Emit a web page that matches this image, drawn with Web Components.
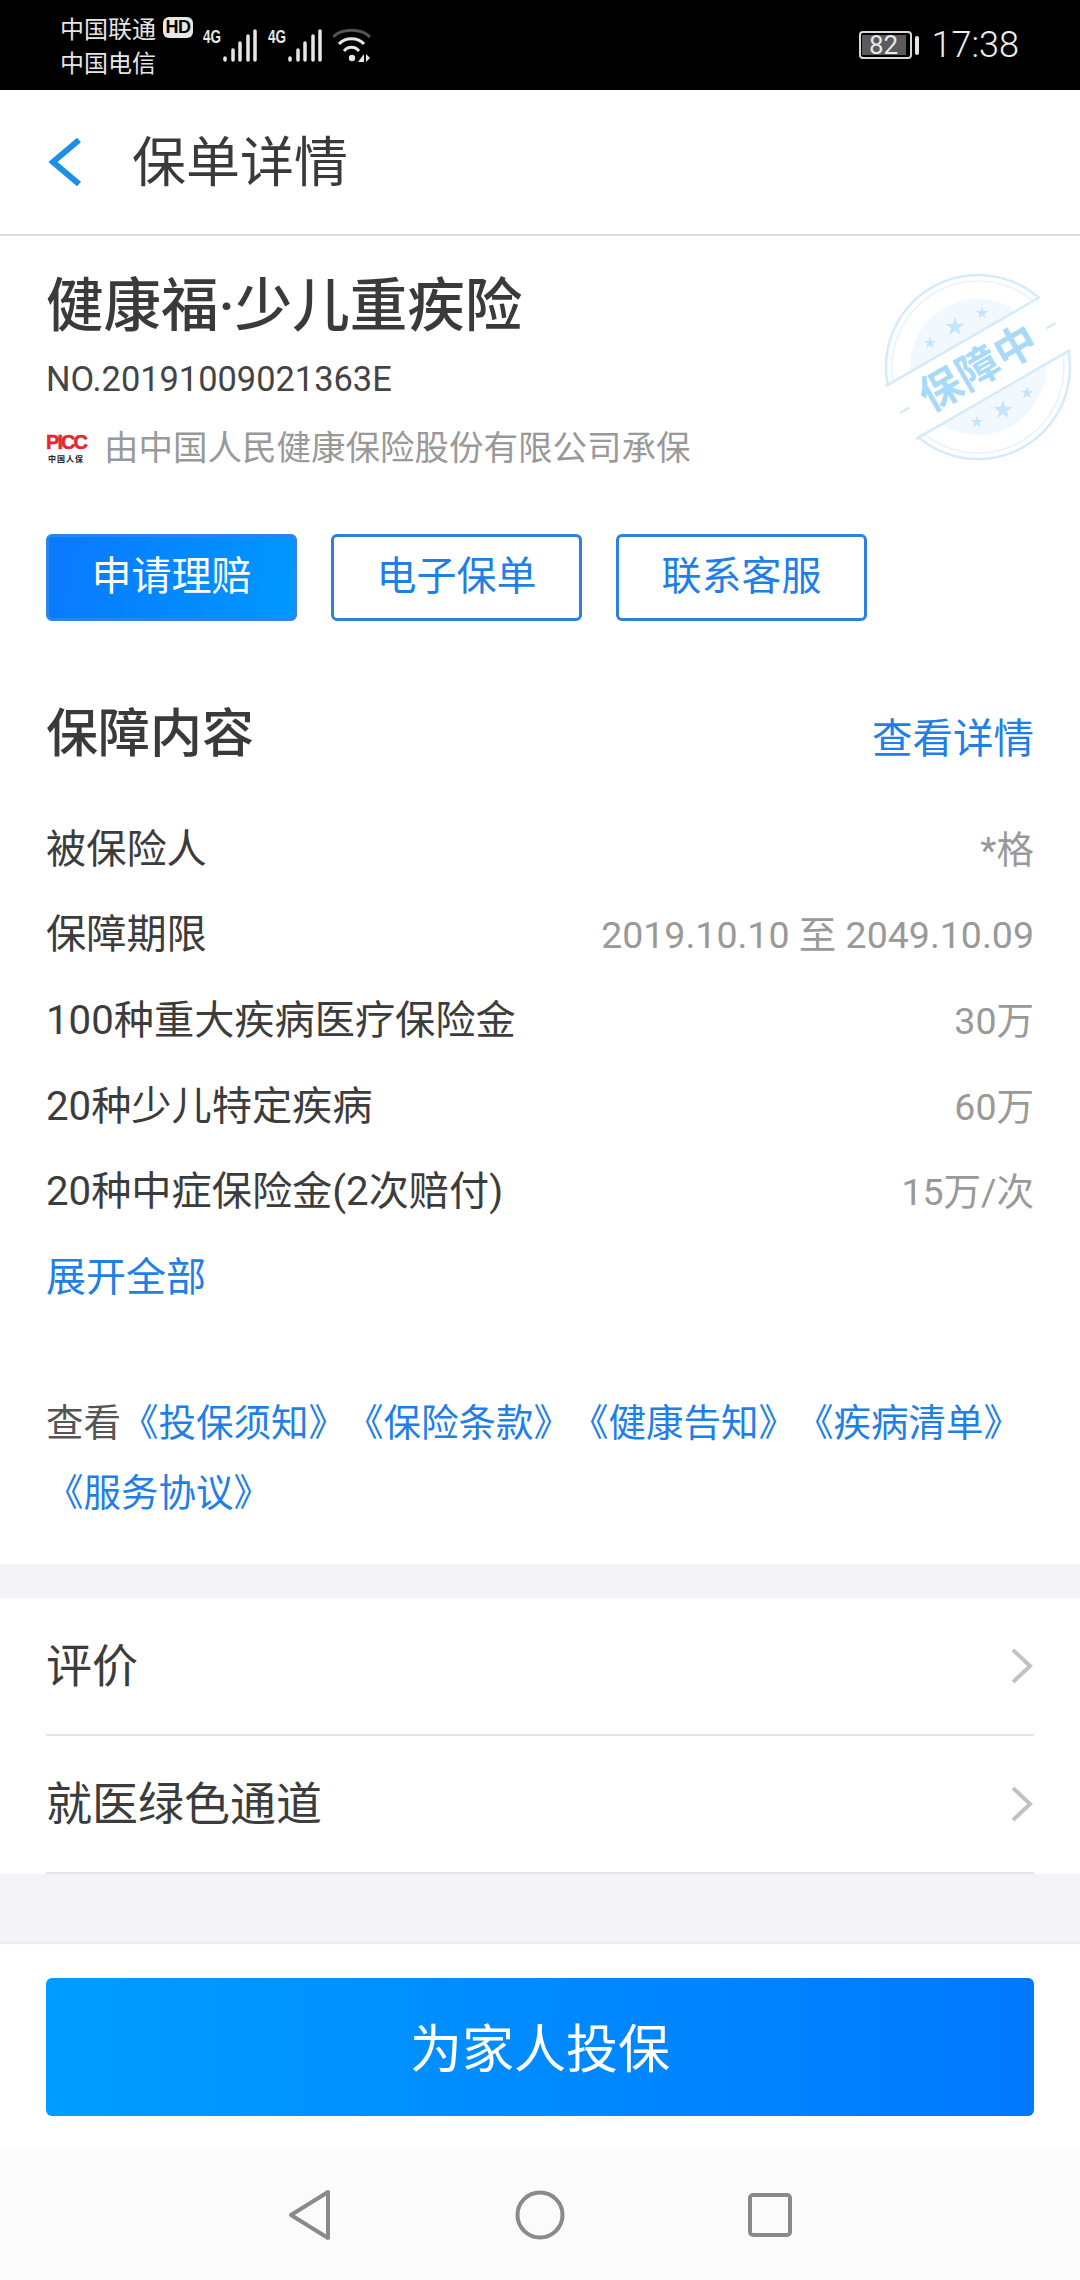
<!DOCTYPE html>
<html lang="zh-CN">
<head>
<meta charset="utf-8">
<title>保单详情</title>
<style>
  html, body { margin: 0; padding: 0; }
  body {
    width: 1080px; height: 2280px; overflow: hidden;
    background: #f3f3f8; color: #333;
    font-family: Roboto, "Noto Sans CJK SC", sans-serif;
    display: flex; flex-direction: column;
  }
</style>
</head>
<body>
<template id="tpl-status">
  <style>
    :host { display: flex; align-items: center; height: 90px; background: #000; color: #e6e6e6; flex: none; padding: 0 61px 0 60px; box-sizing: border-box; }
    .carriers { display: flex; flex-direction: column; font-size: 24px; line-height: 34px; width: 143px; padding-top: 4px; flex: none; }
    .top { display: flex; align-items: center; gap: 7px; }
    .hd { font: 700 18px/21px "Liberation Sans", sans-serif; background: #e6e6e6; color: #000; border-radius: 6px; width: 30px; height: 21px; text-align: center; letter-spacing: -.5px; margin-top: -5px; }
    .signals { display: flex; align-items: flex-start; }
    svg { display: block; flex: none; }
    .sim { width: 65px; height: 40px; }
    .sim text { font: 700 19px "Liberation Sans", sans-serif; fill: #e6e6e6; }
    .right { margin-left: auto; display: flex; align-items: center; gap: 13px; }
    .batt { display: flex; align-items: center; gap: 3px; }
    .cell { border: 2px solid #d8d8d8; border-radius: 4px; padding: 2px 4px 2px 1px; box-sizing: border-box; width: 53px; height: 28px; display: flex; }
    .level { flex: 1; background: #5a5a5a; font: 400 26px/20px Roboto, sans-serif; color: #e8e8e8; text-align: center; }
    .cap { width: 4px; height: 19px; background: #e6e6e6; border-radius: 2px; }
    .time { font: 300 36px/40px Roboto, sans-serif; color: #eee; }
  </style>
  <div class="carriers"><div class="top"><span>中国联通</span><span class="hd">HD</span></div><div>中国电信</div></div>
  <div class="signals">
    <svg class="sim" viewBox="0 0 65 40"><text x="0" y="18" textLength="18" lengthAdjust="spacingAndGlyphs">4G</text><path d="M22 35v-2M30 35v-10M37 35v-17M45 35v-24M52 35v-29" stroke="#e6e6e6" stroke-width="3.500" stroke-linecap="round" fill="none"/></svg>
    <svg class="sim" viewBox="0 0 65 40"><text x="0" y="18" textLength="18" lengthAdjust="spacingAndGlyphs">4G</text><path d="M22 35v-2M30 35v-10M37 35v-17M45 35v-24M52 35v-29" stroke="#e6e6e6" stroke-width="3.500" stroke-linecap="round" fill="none"/></svg>
    <svg width="40" height="40" viewBox="0 0 40 40" fill="none">
      <path d="M0 12C9 3 28 3 37 12" stroke="#555" stroke-width="3"/>
      <path d="M6 19C12 12 25 12 31 19" stroke="#e6e6e6" stroke-width="3"/>
      <path d="M11 26C15 21 22 21 26 26" stroke="#e6e6e6" stroke-width="3"/>
      <circle cx="19" cy="33" r="3.200" fill="#e6e6e6"/>
      <path d="M31 29v8h-6zM33 29v8l4-4z" fill="#e6e6e6"/>
    </svg>
  </div>
  <div class="right">
    <div class="batt"><div class="cell"><div class="level">82</div></div><div class="cap"></div></div>
    <div class="time">17:38</div>
  </div>
</template>

<template id="tpl-nav">
  <style>
    :host { display: flex; align-items: center; height: 146px; background: #fff; border-bottom: 2px solid #dcdcdc; box-sizing: border-box; flex: none; padding: 0 0 0 48px; }
    svg { display: block; flex: none; }
    .t { font-size: 54px; margin-left: 50px; margin-top: 4px; color: #3a3a3a; line-height: 70px; }
  </style>
  <svg width="34" height="48" viewBox="0 0 34 48" fill="none"><path d="M31 2 5 24l26 22" stroke="#1e8fe6" stroke-width="6"/></svg>
  <div class="t"><slot></slot></div>
</template>

<template id="tpl-stamp">
  <style>
    :host { display: block; position: absolute; left: 880px; top: 34px; width: 200px; height: 200px; }
    svg { display: block; overflow: visible; }
    text { font-family: "Noto Sans CJK SC", sans-serif; font-weight: 700; font-size: 42px; fill: #a8daf8; }
  </style>
  <svg width="200" height="200" viewBox="0 0 200 200" fill="none">
    <defs>
      <path id="star" d="M0-10 2.400-3.200 9.500-3.100 3.800 1.200 5.900 8.100 0 4-5.900 8.100-3.800 1.200-9.500-3.100-2.400-3.200z" fill="#c4e5fb"/>
    </defs>
    <circle cx="98" cy="97" r="92" stroke="#d4ebfb" stroke-width="2.500"/>
    <circle cx="98" cy="97" r="86" stroke="#e6f3fd" stroke-width="1.500"/>
    <circle cx="98" cy="97" r="68" fill="#f1f8fe"/>
    <use href="#star" transform="translate(75 57)"/>
    <use href="#star" transform="translate(50 73) scale(.65)"/>
    <use href="#star" transform="translate(102 43) scale(.65)"/>
    <use href="#star" transform="translate(123 140)"/>
    <use href="#star" transform="translate(97 152) scale(.65)"/>
    <use href="#star" transform="translate(147 123) scale(.65)"/>
    <g transform="rotate(-30 98 98)">
      <rect x="-10" y="67.500" width="216" height="61" fill="#fff"/>
      <path d="M9 67.500H187M9 128.500H187" stroke="#d4ebfb" stroke-width="2.500"/>
      <path d="M8 98H19M177 98H188" stroke="#d4ebfb" stroke-width="2.500"/>
      <text x="98" y="113" text-anchor="middle" textLength="128">保障中</text>
    </g>
  </svg>
</template>

<template id="tpl-logo">
  <style>
    :host { display: flex; flex-direction: column; align-items: center; width: 40px; flex: none; }
    .a { font: 700 20px/18px "Liberation Sans", sans-serif; color: #e8262d; letter-spacing: -2px; -webkit-text-stroke: .5px #e8262d; }
    .b { font: 700 8px/10px "Noto Sans CJK SC", sans-serif; color: #222; letter-spacing: 1px; margin-top: 3px; white-space: nowrap; }
  </style>
  <div class="a">PICC</div><div class="b">中国人保</div>
</template>

<template id="tpl-action">
  <style>
    :host { display: flex; align-items: center; justify-content: center; width: 251px; height: 87px; box-sizing: border-box; border: 3px solid #2f7fdf; border-radius: 6px; font-size: 40px; line-height: 50px; padding-bottom: 2px; color: #1f7fe6; background: #fff; }
    :host([primary]) { border-color: #2a86ee; color: #fff; background: linear-gradient(100deg, #0a78ff, #0098ff); }
  </style>
  <slot></slot>
</template>

<template id="tpl-row">
  <style>
    :host { display: flex; justify-content: space-between; align-items: center; height: 85.600px; font-size: 40.200px; line-height: 50px; color: #3c3c3c; }
    .v { color: #999; font-size: 37.500px; }
  </style>
  <div><slot name="k"></slot></div><div class="v"><slot name="v"></slot></div>
</template>

<template id="tpl-link-row">
  <style>
    :host { display: block; padding: 0 46px; background: #fff; }
    .r { display: flex; justify-content: space-between; align-items: center; height: 136px; font-size: 46px; line-height: 56px; color: #3c3c3c; border-bottom: 2px solid #e4e4e4; }
    svg { display: block; margin-right: 1px; }
  </style>
  <div class="r"><div><slot></slot></div>
  <svg width="22" height="36" viewBox="0 0 22 36" fill="none"><path d="M2 2l17 16L2 34" stroke="#c2c2c2" stroke-width="4"/></svg></div>
</template>

<template id="tpl-main">
  <style>
    :host { display: block; background: #fff; padding: 0 46px; height: 1328px; box-sizing: border-box; position: relative; flex: none; }
    h1 { margin: 0; padding-top: 36px; font-size: 57.500px; line-height: 70px; font-weight: 500; color: #3a3a3a; }
    .no { margin-top: 15px; font-size: 34.400px; line-height: 44px; color: #444; }
    .src { margin-top: 25px; display: flex; align-items: center; gap: 18px; font-size: 34.500px; line-height: 44px; color: #999; }
    .acts { margin-top: 64px; display: flex; gap: 34px; }
    .hd { margin-top: 82px; margin-bottom: 40px; display: flex; justify-content: space-between; align-items: center; height: 64px; }
    h2 { margin: 0; font-size: 52px; line-height: 64px; font-weight: 500; color: #3a3a3a; }
    .more { font-size: 40.500px; line-height: 50px; color: #1f7fe6; margin-top: 8px; }
    .expand { display: flex; align-items: center; height: 85.600px; font-size: 40px; line-height: 50px; color: #1f7fe6; }
    .legal { margin: 67px 0 0; font-size: 37.500px; line-height: 70px; color: #555; text-spacing-trim: space-all; font-feature-settings: "chws" 0; }
    .legal span { display: inline-block; color: #1f7fe6; white-space: nowrap; }
  </style>
  <h1>健康福·少儿重疾险</h1>
  <div class="no">NO.20191009021363E</div>
  <div class="src"><x-logo></x-logo><span>由中国人民健康保险股份有限公司承保</span></div>
  <x-stamp></x-stamp>
  <div class="acts">
    <x-action primary>申请理赔</x-action><x-action>电子保单</x-action><x-action>联系客服</x-action>
  </div>
  <div class="hd"><h2>保障内容</h2><span class="more">查看详情</span></div>
  <x-row><span slot="k">被保险人</span><span slot="v">*格</span></x-row>
  <x-row><span slot="k">保障期限</span><span slot="v">2019.10.10 至 2049.10.09</span></x-row>
  <x-row><span slot="k">100种重大疾病医疗保险金</span><span slot="v">30万</span></x-row>
  <x-row><span slot="k">20种少儿特定疾病</span><span slot="v">60万</span></x-row>
  <x-row><span slot="k">20种中症保险金(2次赔付)</span><span slot="v">15万/次</span></x-row>
  <div class="expand">展开全部</div>
  <p class="legal">查看<span>《投保须知》</span><span>《保险条款》</span><span>《健康告知》</span><span>《疾病清单》</span><span>《服务协议》</span></p>
</template>

<template id="tpl-footer">
  <style>
    :host { display: block; background: #fff; padding: 34px 46px 34px; box-shadow: 0 -1px 3px rgba(0,0,0,.06); flex: none; margin-top: auto; }
    .b { height: 138px; border-radius: 6px; background: linear-gradient(90deg, #009dff, #0078ff); color: #fff; font-size: 52px; padding-bottom: 3px; box-sizing: border-box; display: flex; align-items: center; justify-content: center; }
  </style>
  <div class="b"><slot></slot></div>
</template>

<template id="tpl-keys">
  <style>
    :host { display: flex; align-items: center; justify-content: center; height: 130px; background: #fbfbfb; flex: none; }
    svg { display: block; }
    .c { width: 230px; display: flex; justify-content: center; }
  </style>
  <div class="c"><svg width="44" height="52" viewBox="0 0 44 52" fill="none"><path d="M40 3v46L3 26z" stroke="#8a8a8a" stroke-width="4" stroke-linejoin="round"/></svg></div>
  <div class="c"><svg width="50" height="50" viewBox="0 0 50 50" fill="none"><circle cx="25" cy="25" r="22.500" stroke="#8a8a8a" stroke-width="4"/></svg></div>
  <div class="c"><svg width="44" height="44" viewBox="0 0 44 44" fill="none"><rect x="2" y="2" width="40" height="40" rx="3" stroke="#8a8a8a" stroke-width="4"/></svg></div>
</template>

<x-status></x-status>
<x-nav>保单详情</x-nav>
<x-main></x-main>
<x-link-row style="margin-top:34px">评价</x-link-row>
<x-link-row>就医绿色通道</x-link-row>
<x-footer>为家人投保</x-footer>
<x-keys></x-keys>

<script>
  // Every element clones its own template into an open shadow root.
  const names = ['status', 'nav', 'stamp', 'logo', 'action', 'row', 'link-row', 'main', 'footer', 'keys'];
  for (const name of names) {
    customElements.define('x-' + name, class extends HTMLElement {
      constructor() {
        super();
        const tpl = document.getElementById('tpl-' + name);
        this.attachShadow({ mode: 'open' }).appendChild(tpl.content.cloneNode(true));
      }
    });
  }
</script>
</body>
</html>
